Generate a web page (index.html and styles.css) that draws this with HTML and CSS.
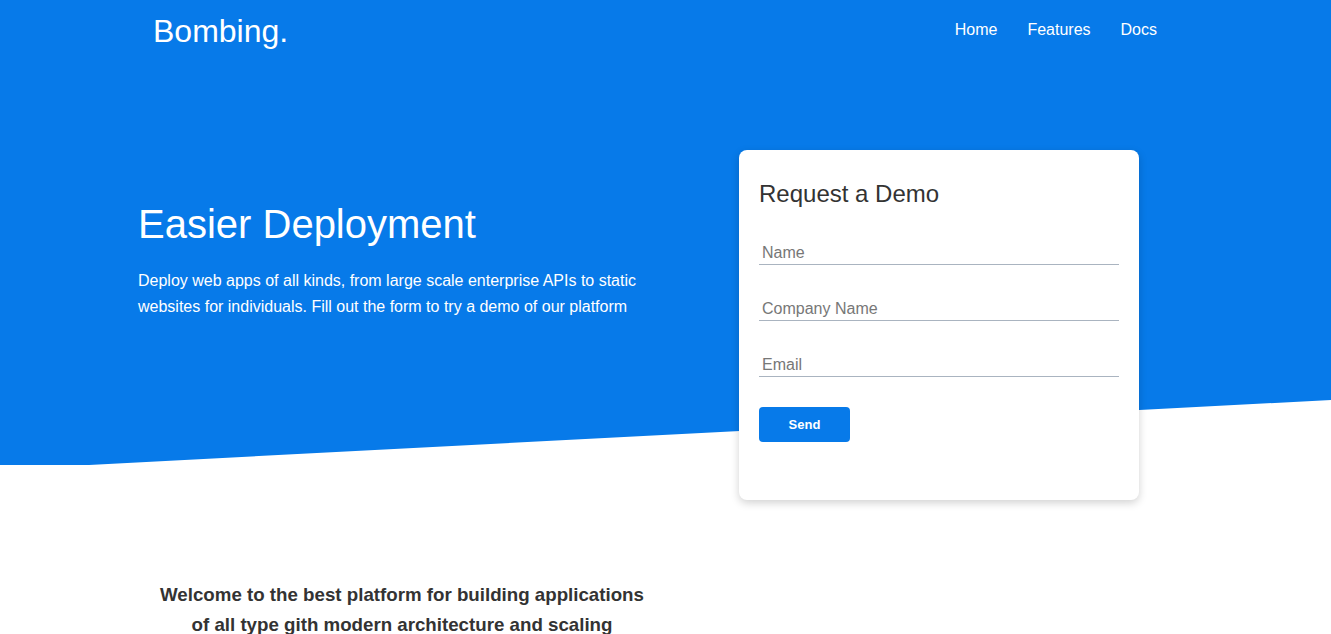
FILE: index.html
```html
<!DOCTYPE html>
<html>
<head>
<meta charset="utf-8">
<link rel="stylesheet" href="styles.css">
</head>
<body>
<header class="hero">
  <nav class="nav">
    <div class="logo">Bombing.</div>
    <ul class="links">
      <li>Home</li>
      <li>Features</li>
      <li>Docs</li>
    </ul>
  </nav>
  <div class="hero-body">
    <div class="hero-text">
      <h1>Easier Deployment</h1>
      <p>Deploy web apps of all kinds, from large scale enterprise APIs to static websites for individuals. Fill out the form to try a demo of our platform</p>
    </div>
  </div>
</header>
<div class="card-wrap">
  <form class="card">
    <h2>Request a Demo</h2>
    <input class="field" type="text" placeholder="Name">
    <input class="field" type="text" placeholder="Company Name">
    <input class="field" type="text" placeholder="Email">
    <button class="send" type="button">Send</button>
  </form>
</div>
<section class="welcome">
  <h3>Welcome to the best platform for building applications of all type gith modern architecture and scaling</h3>
</section>
</body>
</html>
```

FILE: styles.css
```css
* { box-sizing: border-box; }
html, body { margin: 0; padding: 0; }
body {
  font-family: "Liberation Sans", Arial, sans-serif;
  background: #fff;
  color: #333;
  overflow: hidden;
  height: 634px;
}
.hero {
  background: #077ae9;
  height: 465px;
  clip-path: polygon(0 0, 100% 0, 100% 400px, 89px 465px, 0 465px);
  color: #fff;
}
.nav {
  display: flex;
  justify-content: space-between;
  align-items: center;
  padding: 6px 174px 0 153px;
  height: 56px;
}
.logo {
  font-size: 32px;
  line-height: 40px;
}
.links {
  display: flex;
  gap: 30px;
  list-style: none;
  margin: 0;
  padding: 0;
  font-size: 16px;
  margin-top: -2px;
}
.hero-body {
  padding: 144px 0 0 138px;
}
.hero-text { width: 528px; }
.hero-text h1 {
  font-size: 40px;
  font-weight: normal;
  margin: 0 0 20px;
  line-height: 48px;
}
.hero-text p {
  font-size: 16px;
  line-height: 26px;
  margin: 0;
}
.card-wrap {
  position: absolute;
  top: 150px;
  left: 739px;
}
.card {
  width: 400px;
  height: 350px;
  background: #fff;
  border-radius: 8px;
  box-shadow: 0 3px 8px rgba(0,0,0,0.18);
  padding: 27px 20px 20px;
  display: flex;
  flex-direction: column;
  align-items: flex-start;
}
.card h2 {
  font-size: 24px;
  font-weight: normal;
  color: #333;
  margin: 0 0 30px;
  line-height: 34px;
}
.field {
  width: 360px;
  border: none;
  border-bottom: 1px solid #aab4c0;
  font: 16px "Liberation Sans", Arial, sans-serif;
  padding: 4px 3px 3px;
  margin-bottom: 32px;
  outline: none;
  background: transparent;
  height: 24px;
}
.field::placeholder { color: #777; }
.send {
  margin-top: -2px;
  width: 91px;
  height: 35px;
  background: #077ae9;
  color: #fff;
  border: none;
  border-radius: 4px;
  font: bold 13px "Liberation Sans", Arial, sans-serif;
}
.welcome {
  padding: 0 0 0 157px;
  margin-top: 115px;
}
.welcome h3 {
  width: 490px;
  text-align: center;
  font-size: 18.72px;
  line-height: 30px;
  margin: 0;
  color: #333;
}
```
